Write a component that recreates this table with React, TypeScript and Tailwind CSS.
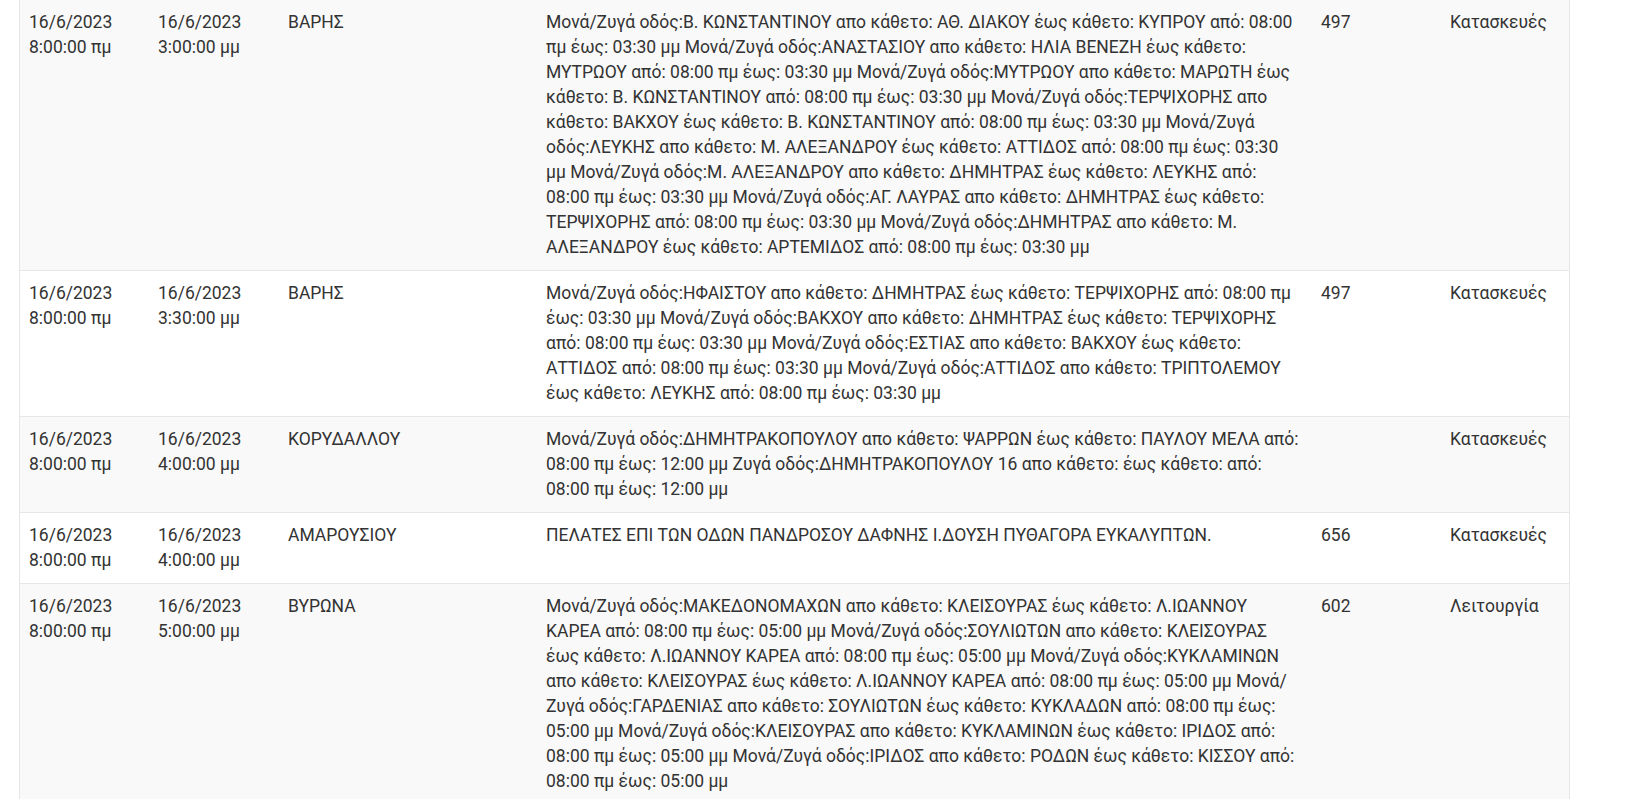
interface Outage {
  start: string
  end: string
  area: string
  details: string
  code?: string
  kind: string
}

const outages: Outage[] = [
  {
    start: '16/6/2023 8:00:00 πμ',
    end: '16/6/2023 3:00:00 μμ',
    area: 'ΒΑΡΗΣ',
    details:
      'Μονά/Ζυγά οδός:Β. ΚΩΝΣΤΑΝΤΙΝΟΥ απο κάθετο: ΑΘ. ΔΙΑΚΟΥ έως κάθετο: ΚΥΠΡΟΥ από: 08:00 πμ έως: 03:30 μμ Μονά/Ζυγά οδός:ΑΝΑΣΤΑΣΙΟΥ απο κάθετο: ΗΛΙΑ ΒΕΝΕΖΗ έως κάθετο: ΜΥΤΡΩΟΥ από: 08:00 πμ έως: 03:30 μμ Μονά/Ζυγά οδός:ΜΥΤΡΩΟΥ απο κάθετο: ΜΑΡΩΤΗ έως κάθετο: Β. ΚΩΝΣΤΑΝΤΙΝΟΥ από: 08:00 πμ έως: 03:30 μμ Μονά/Ζυγά οδός:ΤΕΡΨΙΧΟΡΗΣ απο κάθετο: ΒΑΚΧΟΥ έως κάθετο: Β. ΚΩΝΣΤΑΝΤΙΝΟΥ από: 08:00 πμ έως: 03:30 μμ Μονά/Ζυγά οδός:ΛΕΥΚΗΣ απο κάθετο: Μ. ΑΛΕΞΑΝΔΡΟΥ έως κάθετο: ΑΤΤΙΔΟΣ από: 08:00 πμ έως: 03:30 μμ Μονά/Ζυγά οδός:Μ. ΑΛΕΞΑΝΔΡΟΥ απο κάθετο: ΔΗΜΗΤΡΑΣ έως κάθετο: ΛΕΥΚΗΣ από: 08:00 πμ έως: 03:30 μμ Μονά/Ζυγά οδός:ΑΓ. ΛΑΥΡΑΣ απο κάθετο: ΔΗΜΗΤΡΑΣ έως κάθετο: ΤΕΡΨΙΧΟΡΗΣ από: 08:00 πμ έως: 03:30 μμ Μονά/Ζυγά οδός:ΔΗΜΗΤΡΑΣ απο κάθετο: Μ. ΑΛΕΞΑΝΔΡΟΥ έως κάθετο: ΑΡΤΕΜΙΔΟΣ από: 08:00 πμ έως: 03:30 μμ',
    code: '497',
    kind: 'Κατασκευές'
  },
  {
    start: '16/6/2023 8:00:00 πμ',
    end: '16/6/2023 3:30:00 μμ',
    area: 'ΒΑΡΗΣ',
    details:
      'Μονά/Ζυγά οδός:ΗΦΑΙΣΤΟΥ απο κάθετο: ΔΗΜΗΤΡΑΣ έως κάθετο: ΤΕΡΨΙΧΟΡΗΣ από: 08:00 πμ έως: 03:30 μμ Μονά/Ζυγά οδός:ΒΑΚΧΟΥ απο κάθετο: ΔΗΜΗΤΡΑΣ έως κάθετο: ΤΕΡΨΙΧΟΡΗΣ από: 08:00 πμ έως: 03:30 μμ Μονά/Ζυγά οδός:ΕΣΤΙΑΣ απο κάθετο: ΒΑΚΧΟΥ έως κάθετο: ΑΤΤΙΔΟΣ από: 08:00 πμ έως: 03:30 μμ Μονά/Ζυγά οδός:ΑΤΤΙΔΟΣ απο κάθετο: ΤΡΙΠΤΟΛΕΜΟΥ έως κάθετο: ΛΕΥΚΗΣ από: 08:00 πμ έως: 03:30 μμ',
    code: '497',
    kind: 'Κατασκευές'
  },
  {
    start: '16/6/2023 8:00:00 πμ',
    end: '16/6/2023 4:00:00 μμ',
    area: 'ΚΟΡΥΔΑΛΛΟΥ',
    details:
      'Μονά/Ζυγά οδός:ΔΗΜΗΤΡΑΚΟΠΟΥΛΟΥ απο κάθετο: ΨΑΡΡΩΝ έως κάθετο: ΠΑΥΛΟΥ ΜΕΛΑ από: 08:00 πμ έως: 12:00 μμ Ζυγά οδός:ΔΗΜΗΤΡΑΚΟΠΟΥΛΟΥ 16 απο κάθετο: έως κάθετο: από: 08:00 πμ έως: 12:00 μμ',
    kind: 'Κατασκευές'
  },
  {
    start: '16/6/2023 8:00:00 πμ',
    end: '16/6/2023 4:00:00 μμ',
    area: 'ΑΜΑΡΟΥΣΙΟΥ',
    details: 'ΠΕΛΑΤΕΣ ΕΠΙ ΤΩΝ ΟΔΩΝ ΠΑΝΔΡΟΣΟΥ ΔΑΦΝΗΣ Ι.ΔΟΥΣΗ ΠΥΘΑΓΟΡΑ ΕΥΚΑΛΥΠΤΩΝ.',
    code: '656',
    kind: 'Κατασκευές'
  },
  {
    start: '16/6/2023 8:00:00 πμ',
    end: '16/6/2023 5:00:00 μμ',
    area: 'ΒΥΡΩΝΑ',
    details:
      'Μονά/Ζυγά οδός:ΜΑΚΕΔΟΝΟΜΑΧΩΝ απο κάθετο: ΚΛΕΙΣΟΥΡΑΣ έως κάθετο: Λ.ΙΩΑΝΝΟΥ ΚΑΡΕΑ από: 08:00 πμ έως: 05:00 μμ Μονά/Ζυγά οδός:ΣΟΥΛΙΩΤΩΝ απο κάθετο: ΚΛΕΙΣΟΥΡΑΣ έως κάθετο: Λ.ΙΩΑΝΝΟΥ ΚΑΡΕΑ από: 08:00 πμ έως: 05:00 μμ Μονά/Ζυγά οδός:ΚΥΚΛΑΜΙΝΩΝ απο κάθετο: ΚΛΕΙΣΟΥΡΑΣ έως κάθετο: Λ.ΙΩΑΝΝΟΥ ΚΑΡΕΑ από: 08:00 πμ έως: 05:00 μμ Μονά/Ζυγά οδός:ΓΑΡΔΕΝΙΑΣ απο κάθετο: ΣΟΥΛΙΩΤΩΝ έως κάθετο: ΚΥΚΛΑΔΩΝ από: 08:00 πμ έως: 05:00 μμ Μονά/Ζυγά οδός:ΚΛΕΙΣΟΥΡΑΣ απο κάθετο: ΚΥΚΛΑΜΙΝΩΝ έως κάθετο: ΙΡΙΔΟΣ από: 08:00 πμ έως: 05:00 μμ Μονά/Ζυγά οδός:ΙΡΙΔΟΣ απο κάθετο: ΡΟΔΩΝ έως κάθετο: ΚΙΣΣΟΥ από: 08:00 πμ έως: 05:00 μμ',
    code: '602',
    kind: 'Λειτουργία'
  }
]

export default function App() {
  return (
    <div className="min-h-screen bg-white font-['Roboto','Liberation_Sans',sans-serif] text-[17.5px] leading-[25px] text-[#333]">
      <div className="ml-[19px] w-[1551px] border-x border-[#e6e6e6]">
        <table className="w-full table-fixed border-collapse">
          <colgroup>
            <col className="w-[129px]" />
            <col className="w-[130px]" />
            <col className="w-[258px]" />
            <col className="w-[775px]" />
            <col className="w-[129px]" />
            <col className="w-[128px]" />
          </colgroup>
          <tbody>
            {outages.map((o, i) => (
              <tr
                key={i}
                className={`${i % 2 === 0 ? 'bg-[#f9f9f9]' : 'bg-white'} ${i > 0 ? 'border-t border-[#e6e6e6]' : ''}`}
              >
                <td className="px-[9px] py-[10px] align-top">{o.start}</td>
                <td className="px-[9px] py-[10px] align-top">{o.end}</td>
                <td className="px-[9px] py-[10px] align-top">{o.area}</td>
                <td className="pl-[9px] pr-[12px] py-[10px] align-top">{o.details}</td>
                <td className="px-[9px] py-[10px] align-top">{o.code}</td>
                <td className="px-[9px] py-[10px] align-top">{o.kind}</td>
              </tr>
            ))}
          </tbody>
        </table>
      </div>
    </div>
  )
}
